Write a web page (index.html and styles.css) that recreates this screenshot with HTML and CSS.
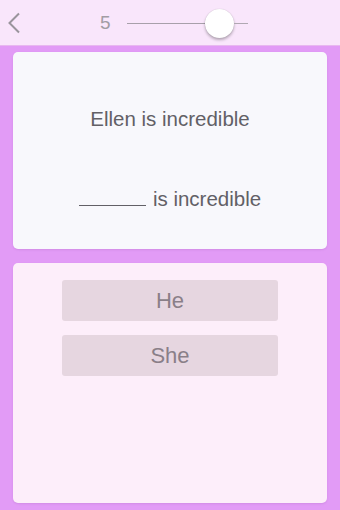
FILE: index.html
```html
<!DOCTYPE html>
<html>
<head>
<meta charset="utf-8">
<link rel="stylesheet" href="styles.css">
</head>
<body>
<div class="app">
  <header class="topbar">
    <svg class="back" width="14" height="22" viewBox="0 0 14 22"><path d="M12 1.5 L2.5 11 L12 20.5" fill="none" stroke="#9a949c" stroke-width="2"/></svg>
    <span class="level">5</span>
    <div class="slider">
      <div class="track-left"></div>
      <div class="thumb"></div>
      <div class="track-right"></div>
    </div>
  </header>
  <main class="content">
    <section class="card question">
      <p class="line">Ellen is incredible</p>
      <p class="line"><span class="blank"></span>is incredible</p>
    </section>
    <section class="card answers">
      <button class="choice">He</button>
      <button class="choice">She</button>
    </section>
  </main>
</div>
</body>
</html>
```
FILE: styles.css
```css
* { box-sizing: border-box; }
html, body { margin: 0; padding: 0; }
body {
  width: 340px;
  height: 510px;
  background: #e29bf6;
  font-family: "Liberation Sans", Arial, sans-serif;
  overflow: hidden;
}
.app { display: flex; flex-direction: column; height: 510px; }
.topbar {
  height: 46px;
  background: #f9e6fb;
  border-bottom: 1px solid #e8b8f0;
  display: flex;
  align-items: center;
  padding-left: 7px;
  flex-shrink: 0;
}
.back { display: block; margin-top: 1px; }
.level {
  margin-left: 79px;
  font-size: 19px;
  color: #a29ca4;
  width: 27px;
  margin-top: 1px;
}
.slider {
  display: flex;
  align-items: center;
  width: 121px;
  margin-top: 2px;
}
.track-left { width: 78px; height: 1.5px; background: #a8a0aa; }
.track-right { width: 14px; height: 1.5px; background: #b0a8b2; }
.thumb {
  width: 29px; height: 29px;
  border-radius: 50%;
  background: #ffffff;
  box-shadow: 0 2px 3px rgba(0,0,0,0.28), 0 0 1px rgba(0,0,0,0.2);
  flex-shrink: 0;
}
.content {
  flex: 1;
  display: flex;
  flex-direction: column;
  gap: 14px;
  padding: 6px 13px 7px 13px;
}
.card {
  border-radius: 5px;
  box-shadow: 0 1px 2px rgba(120,60,140,0.15);
}
.question {
  height: 197px;
  background: #f8f8fc;
  display: flex;
  flex-direction: column;
  align-items: center;
  padding-top: 55px;
  gap: 56px;
}
.line {
  margin: 0;
  font-size: 20.5px;
  line-height: 24px;
  color: #626066;
}
.blank {
  display: inline-block;
  width: 67px;
  border-bottom: 1.5px solid #626066;
  margin-right: 7px;
  vertical-align: baseline;
}
.answers {
  flex: 1;
  background: #fdeefa;
  display: flex;
  flex-direction: column;
  align-items: center;
  padding-top: 17px;
  gap: 14px;
}
.choice {
  width: 216px;
  height: 41px;
  border: none;
  border-radius: 3px;
  background: #e6d6e0;
  font-family: "Liberation Sans", Arial, sans-serif;
  font-size: 22px;
  color: #8a7f88;
  padding: 0;
}
```
